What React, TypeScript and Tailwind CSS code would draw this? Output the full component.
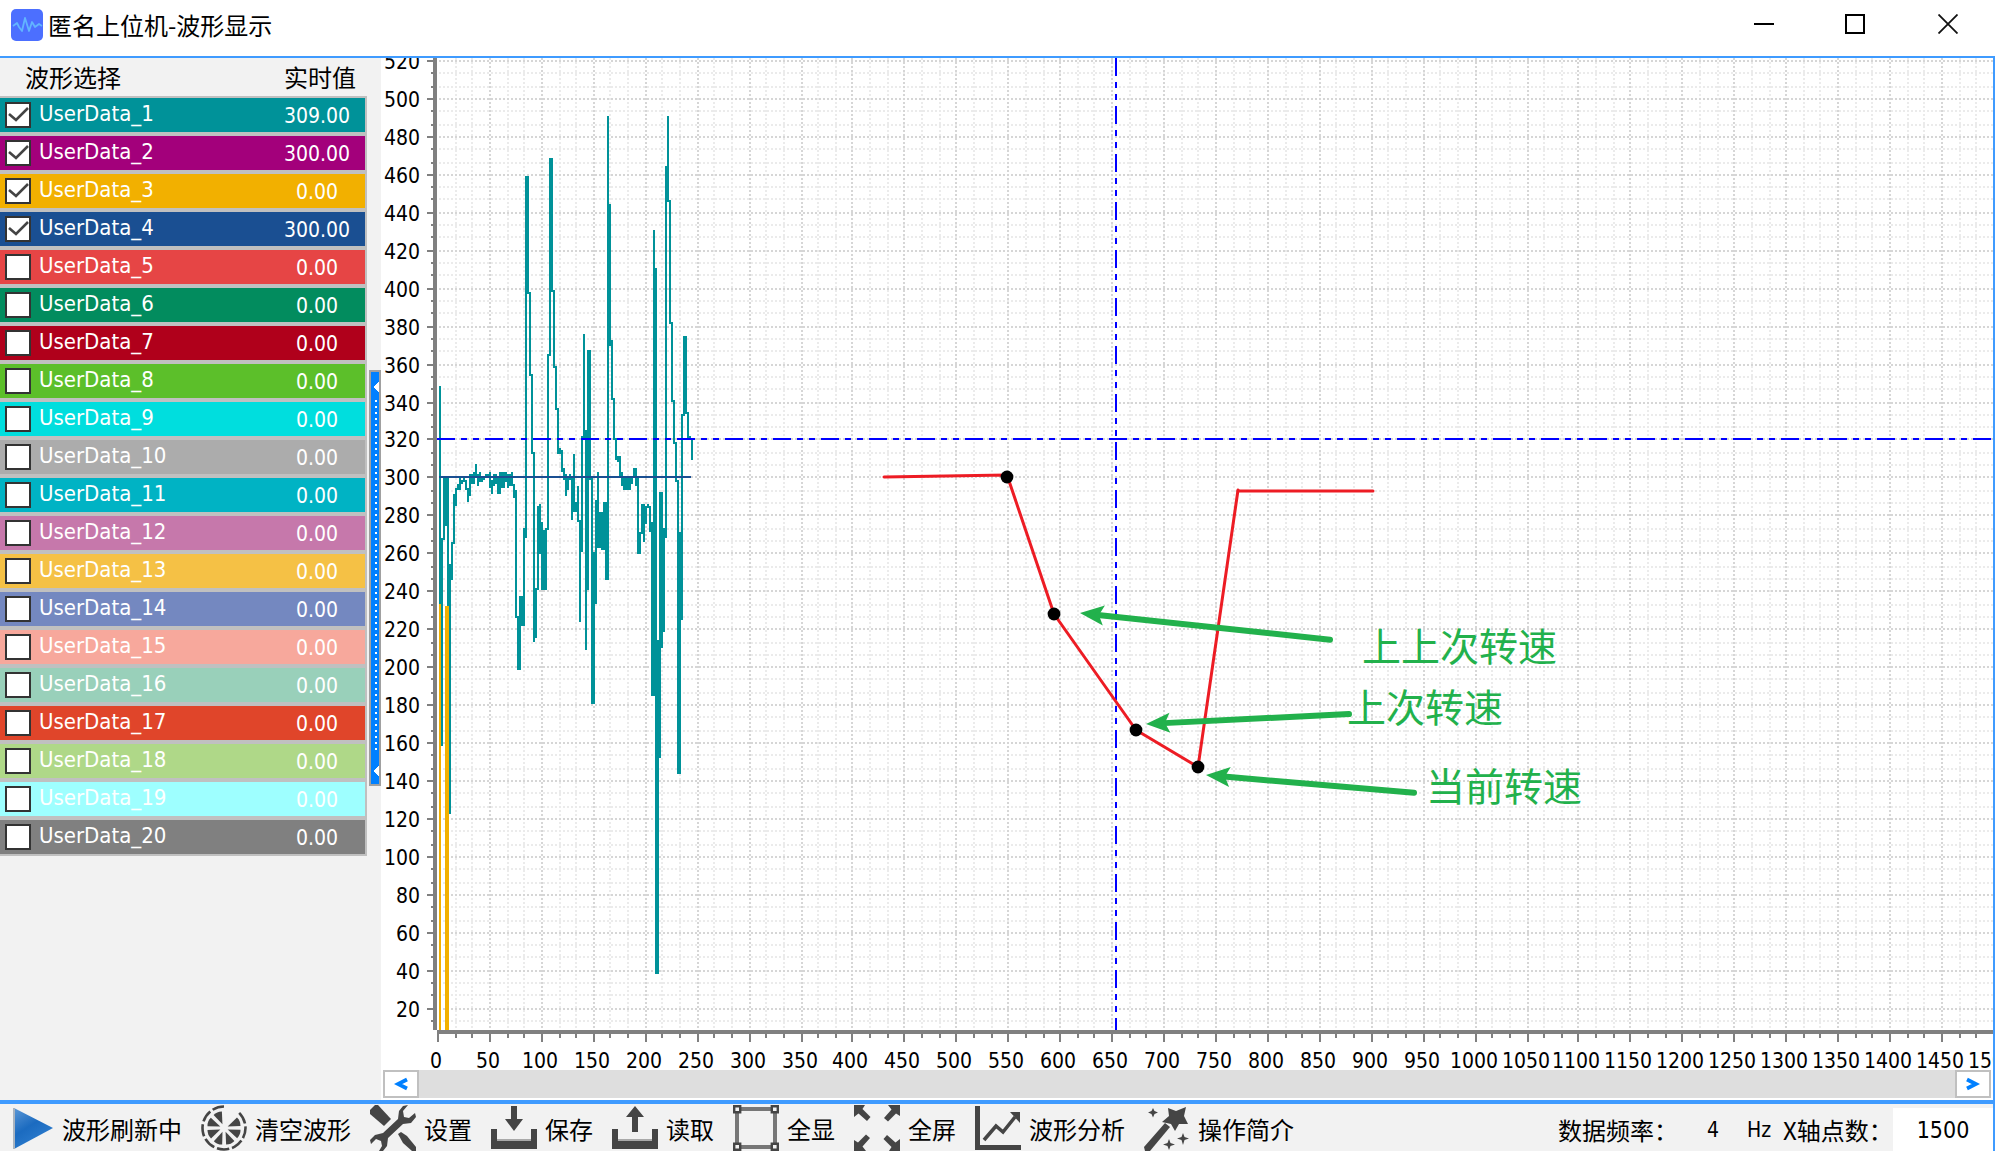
import React from "react";

type Channel = { color: string; value: string; on: boolean };

const CHANNELS: Channel[] = [
  { color: "bg-[#009299]", value: "309.00", on: true },
  { color: "bg-[#a3007b]", value: "300.00", on: true },
  { color: "bg-[#f2b000]", value: "0.00", on: true },
  { color: "bg-[#1a4f92]", value: "300.00", on: true },
  { color: "bg-[#e64545]", value: "0.00", on: false },
  { color: "bg-[#028c5e]", value: "0.00", on: false },
  { color: "bg-[#b0001b]", value: "0.00", on: false },
  { color: "bg-[#5cbf2a]", value: "0.00", on: false },
  { color: "bg-[#00dede]", value: "0.00", on: false },
  { color: "bg-[#acacac]", value: "0.00", on: false },
  { color: "bg-[#00b3c4]", value: "0.00", on: false },
  { color: "bg-[#c678ab]", value: "0.00", on: false },
  { color: "bg-[#f5c145]", value: "0.00", on: false },
  { color: "bg-[#7488c0]", value: "0.00", on: false },
  { color: "bg-[#f7a89c]", value: "0.00", on: false },
  { color: "bg-[#99d0ba]", value: "0.00", on: false },
  { color: "bg-[#e0452a]", value: "0.00", on: false },
  { color: "bg-[#afd888]", value: "0.00", on: false },
  { color: "bg-[#9effff]", value: "0.00", on: false },
  { color: "bg-[#808080]", value: "0.00", on: false },
];

const UI = "font-['DejaVu_Sans_Condensed','Noto_Sans_CJK_SC',sans-serif]";
const CJK = "font-['Noto_Sans_CJK_SC',sans-serif]";

/* Channel 1 trace: [x, width, top, bottom], three units to a pixel. */
const TRACE: [number, number, number, number][] = [
  [57, 6, 918, 1572], [63, 6, 1374, 1998], [69, 6, 1191, 1380], [75, 6, 1191, 1338], [81, 6, 1191, 1578],
  [87, 6, 1452, 2202], [93, 6, 1386, 1500], [99, 6, 1242, 1392], [105, 6, 1224, 1278], [111, 6, 1212, 1230],
  [117, 6, 1194, 1230], [123, 6, 1200, 1212], [129, 6, 1194, 1206], [135, 6, 1200, 1230], [141, 6, 1224, 1266],
  [147, 6, 1182, 1248], [153, 6, 1182, 1212], [159, 6, 1176, 1212], [165, 6, 1152, 1194], [171, 6, 1182, 1218],
  [177, 6, 1176, 1206], [183, 6, 1188, 1206], [189, 6, 1188, 1200], [195, 12, 1182, 1194], [207, 6, 1176, 1224],
  [213, 6, 1200, 1242], [219, 6, 1182, 1218], [225, 6, 1182, 1212], [231, 6, 1188, 1242], [237, 6, 1176, 1242],
  [243, 12, 1176, 1224], [255, 6, 1176, 1206], [261, 6, 1182, 1224], [267, 6, 1182, 1218], [273, 6, 1176, 1218],
  [279, 6, 1212, 1254], [285, 6, 1230, 1614], [291, 12, 1608, 1770], [297, 12, 1548, 1638], [309, 6, 1344, 1638],
  [315, 6, 288, 1374], [321, 6, 288, 642], [327, 6, 636, 888], [333, 6, 882, 1122], [339, 6, 1116, 1686],
  [345, 6, 1524, 1674], [351, 6, 1278, 1530], [357, 6, 1272, 1422], [363, 6, 1326, 1530], [369, 12, 1350, 1530],
  [375, 12, 1344, 1350], [381, 6, 822, 1350], [387, 6, 234, 828], [393, 6, 234, 636], [399, 6, 630, 864],
  [405, 6, 858, 990], [411, 6, 984, 1122], [417, 6, 1104, 1122], [423, 6, 1110, 1176], [429, 6, 1164, 1200],
  [435, 6, 1182, 1248], [441, 6, 1194, 1230], [447, 6, 1182, 1200], [453, 6, 1194, 1320], [459, 6, 1122, 1296],
  [465, 6, 1266, 1296], [471, 6, 1218, 1326], [477, 6, 1320, 1626], [483, 6, 1068, 1416], [489, 6, 762, 1074],
  [495, 6, 1050, 1710], [501, 6, 810, 1530], [507, 6, 810, 1200], [513, 6, 1194, 1872], [519, 6, 1416, 1872],
  [525, 6, 1260, 1572], [531, 6, 1176, 1404], [537, 6, 1296, 1404], [543, 6, 1296, 1410], [549, 6, 1266, 1410],
  [555, 6, 1266, 1500], [561, 6, 108, 1500], [567, 6, 372, 798], [573, 6, 780, 960], [579, 6, 954, 1080],
  [585, 6, 1074, 1140], [591, 6, 1128, 1146], [597, 6, 1128, 1188], [603, 6, 1176, 1218], [609, 24, 1194, 1230],
  [633, 6, 1194, 1212], [639, 12, 1164, 1194], [645, 6, 1188, 1218], [651, 6, 1188, 1422], [657, 6, 1356, 1422],
  [663, 6, 1272, 1362], [669, 6, 1272, 1386], [675, 6, 1278, 1332], [681, 6, 1272, 1284], [687, 6, 1278, 1356],
  [693, 6, 1326, 1848], [699, 6, 450, 1848], [705, 6, 564, 2682], [711, 6, 1680, 2682], [717, 6, 1236, 2034],
  [723, 6, 1236, 1704], [729, 6, 1344, 1656], [735, 6, 258, 1374], [741, 6, 108, 366], [747, 6, 360, 732],
  [753, 6, 726, 966], [759, 6, 960, 1092], [765, 6, 1086, 1206], [771, 6, 1200, 2082], [777, 6, 1356, 2082],
  [783, 6, 1002, 1620], [789, 6, 768, 1008], [795, 6, 768, 1002], [801, 6, 996, 1074], [807, 6, 1068, 1080],
  [813, 6, 1074, 1140],
];

/* Chart coordinates start at the plot's top-left corner. */
const AXIS_Y = 972;
const rows = Array.from({ length: 78 }, (_, i) => ({
  major: i % 3 === 0,
  value: 520 - (i / 3) * 20,
  y: 2 * Math.round(30 + (i * 18.95) / 3 - 0.02) - 57,
})).filter((r) => r.y < AXIS_Y);
const cols = Array.from({ length: 91 }, (_, i) => ({
  major: i % 3 === 0,
  value: (i / 3) * 50,
  x: 57 + 2 * Math.round((i * 25.93) / 3),
}));

const ARROWS: [number, number, number, number][] = [
  [699, 555, 951, 582],
  [765, 666, 970, 656],
  [825, 717, 1035, 735],
];

function Chart() {
  return (
    <svg className={`block h-full w-full overflow-visible text-[21px] ${UI}`} role="img" aria-label="波形显示">
      {[false, true].map((major) => (
        <g key={String(major)} stroke={major ? "#d6d6d6" : "#ebebeb"} strokeWidth={2} strokeDasharray="2 2" shapeRendering="crispEdges">
          {rows.filter((r) => r.major === major).map((r) => (
            <line key={r.y} x1={58} x2={1612} y1={r.y} y2={r.y} />
          ))}
          {cols.filter((c) => c.major === major && c.x > 60).map((c) => (
            <line key={c.x} x1={c.x} x2={c.x} y1={0} y2={AXIS_Y} />
          ))}
        </g>
      ))}
      <g fill="#808080" shapeRendering="crispEdges">
        <rect x={52} y={0} width={4} height={AXIS_Y} />
        <rect x={56} y={AXIS_Y} width="100%" height={4} />
        {rows.map((r) => (
          <rect key={r.y} x={r.major ? 46 : 50} y={r.y - 1} width={r.major ? 6 : 2} height={2} />
        ))}
        {cols.map((c) => (
          <rect key={c.x} x={c.x - 1} y={AXIS_Y + 4} width={2} height={c.major ? 8 : 4} />
        ))}
      </g>
      <g fill="#000">
        {rows.filter((r) => r.major).map((r) => (
          <text key={r.y} x={39} y={r.y + 8} textAnchor="end">{Math.round(r.value)}</text>
        ))}
        {cols.filter((c) => c.major).map((c) => (
          <text key={c.x} x={c.x - 2} y={1010} textAnchor="middle">{Math.round(c.value)}</text>
        ))}
      </g>
      <g shapeRendering="crispEdges">
        <g fill="#009299" transform="translate(39 22) scale(0.33333333)">
          {TRACE.map(([x, w, a, b], i) => (
            <rect key={i} x={x} y={a} width={w} height={b - a} />
          ))}
        </g>
        <rect x={58} y={418} width={252} height={2} fill="#1a4f92" />
        <g fill="#f2b000">
          <rect x={58} y={546} width={2} height={426} />
          <rect x={64} y={548} width={4} height={424} />
        </g>
        <g stroke="#0000ff" strokeWidth={2} strokeDasharray="18 6 6 6 6 6">
          <line x1={56} x2={1612} y1={381} y2={381} />
          <line x1={735} x2={735} y1={0} y2={AXIS_Y} />
        </g>
      </g>
      <polyline points="503,419 626,417 673,556 755,672 817,709 857,432" fill="none" stroke="#ed1c24" strokeWidth={3} strokeLinejoin="round" strokeLinecap="round" />
      <line x1={857} x2={992} y1={433} y2={433} stroke="#ed1c24" strokeWidth={3} strokeLinecap="round" />
      <g fill="#000">
        <circle cx={626} cy={419} r={6.4} />
        <circle cx={673} cy={556} r={6.4} />
        <circle cx={755} cy={672} r={6.4} />
        <circle cx={817} cy={709} r={6.4} />
      </g>
      {ARROWS.map(([x, y, ex, ey]) => {
        const deg = (Math.atan2(ey - y, ex - x) * 180) / Math.PI;
        const len = Math.hypot(ex - x, ey - y);
        return (
          <g key={x} transform={`translate(${x} ${y}) rotate(${deg})`} fill="#22b14c" stroke="none">
            <path d="M0 0 L24 -10 L19 0 L24 10 Z" />
            <line x1={18} x2={len - 2} y1={0} y2={0} stroke="#22b14c" strokeWidth={6} strokeLinecap="round" />
          </g>
        );
      })}
      <g className={`text-[39px] ${CJK}`} fill="#22b14c">
        <text x={981} y={603}>上上次转速</text>
        <text x={966} y={664}>上次转速</text>
        <text x={1045} y={743}>当前转速</text>
      </g>
    </svg>
  );
}

const D = "#454545";

const PlayIcon = () => (
  <svg className="h-[46px] w-[41px] shrink-0" viewBox="0 0 41 46">
    <defs>
      <linearGradient id="play" x1="0" y1="0" x2="0.6" y2="1">
        <stop offset="0" stopColor="#5b97d6" />
        <stop offset="0.5" stopColor="#1b6bc0" />
        <stop offset="1" stopColor="#2f7fd0" />
      </linearGradient>
    </defs>
    <path d="M1 3 L40 23 L1 44 Z" fill="url(#play)" />
    <path d="M1 3 V44" stroke="#a9b4c0" strokeWidth="2" />
  </svg>
);

const ClearIcon = () => (
  <svg className="h-[46px] w-[46px] shrink-0" viewBox="0 0 46 46" fill={D}>
    <path d="M38.200 7.800 A21.500 21.500 0 1 1 23 1.500" fill="none" stroke={D} strokeWidth="2.6" strokeDasharray="12.200 2.900" />
    {[45, 90, 135, 180, 225, 270, 315].map((a) => (
      <path key={a} transform={`rotate(${a + 22} 23 23)`} d="M23 19 L18.500 7 Q23 5 27.500 7 Z" />
    ))}
  </svg>
);

const ToolsIcon = () => (
  <svg className="h-[46px] w-[46px] shrink-0" viewBox="0 0 46 46" fill={D}>
    <path d="M0 5 L5 0 H8 L21 14 L14 21 L0 9 Z" />
    <path d="M28 29 L31 27 L37 31 L46 42 V46 H42 L33 38 Z" />
    <path d="M38 0 L33 6 L34 12 L39 13 L45 8 L46 12 L41 18 L33 19 L18 33 L17 41 L13 46 H9 L12 41 L11 36 L6 34 L1 39 L0 35 L5 30 L13 28 L28 14 L29 6 L33 1 Z" />
  </svg>
);

const TransferIcon = ({ up }: { up?: boolean }) => (
  <svg className="h-[46px] w-[46px] shrink-0" viewBox="0 0 46 46" fill={D}>
    <path d="M0 24 H6 V35 H40 V24 H46 V44 H0 Z" />
    <path d="M6 34 H40 V36 H6 Z" fill="#a9a9a9" />
    {up ? <path d="M20 27 V12 H14 L23 1 L32 12 H26 V27 Z" /> : <path d="M20 1 V14 H14 L23 26 L32 14 H26 V1 Z" />}
  </svg>
);

const FrameIcon = () => (
  <svg className="h-[46px] w-[46px] shrink-0" viewBox="0 0 46 46" fill="none" stroke={D} strokeWidth="2.4">
    <path d="M8 4 H38 M8 42 H38" stroke="#777" strokeWidth="4" />
    <path d="M4 8 V38 M42 8 V38" stroke="#777" strokeWidth="4" />
    <path d="M1.2 1.2h6v6h-6z M38.8 1.2h6v6h-6z M1.2 38.8h6v6h-6z M38.8 38.8h6v6h-6z" fill="#f2f2f2" />
  </svg>
);

const ExpandIcon = () => (
  <svg className="h-[46px] w-[46px] shrink-0" viewBox="0 0 46 46" fill={D}>
    {[0, 90, 180, 270].map((a) => (
      <path key={a} transform={`rotate(${a} 23 23)`} d="M0 0 H11 L8.500 4 L16.500 12 L13 16 L4.500 8.500 L0 12 Z" />
    ))}
  </svg>
);

const TrendIcon = () => (
  <svg className="h-[46px] w-[46px] shrink-0" viewBox="0 0 46 46" fill={D}>
    <path d="M0 1 H5 V40 H46 V45 H0 Z" />
    <path d="M9 35 L21 21 L28 27 L40 12" fill="none" stroke={D} strokeWidth="3.6" />
    <path d="M35 7 H45 V18 Z" />
  </svg>
);

const WandIcon = () => (
  <svg className="h-[46px] w-[46px] shrink-0" viewBox="0 0 46 46" fill={D}>
    <path d="M1 46 L0 42 L21 18 L26 22 L6 46 Z" />
    <path d="M42 2 L40 11 L44 19 L35 19 L31 26 L27 19 L18 17 L25 11 L24 3 L32 6 Z" />
    <path d="M9 3 L10.500 6 L14 7.500 L10.500 9 L9 12.500 L7.500 9 L4 7.500 L7.500 6 Z" />
    <path d="M39 28 L40.500 32 L45 33.500 L40.500 35 L39 40 L37.500 35 L33 33.500 L37.500 32 Z" />
    <path d="M25 34 L26.500 38 L31 39.500 L26.500 41 L25 45 L23.500 41 L19 39.500 L23.500 38 Z" />
  </svg>
);

const TOOLS: { label: string; icon: React.ReactNode }[] = [
  { label: "波形刷新中", icon: <PlayIcon /> },
  { label: "清空波形", icon: <ClearIcon /> },
  { label: "设置", icon: <ToolsIcon /> },
  { label: "保存", icon: <TransferIcon /> },
  { label: "读取", icon: <TransferIcon up /> },
  { label: "全显", icon: <FrameIcon /> },
  { label: "全屏", icon: <ExpandIcon /> },
  { label: "波形分析", icon: <TrendIcon /> },
  { label: "操作简介", icon: <WandIcon /> },
];

function TitleBar() {
  return (
    <header className="flex h-14 shrink-0 items-start justify-between bg-white">
      <div className="flex h-[50px] items-center gap-[5px] pl-[11px]">
        <svg className="h-8 w-8" viewBox="0 0 32 32">
          <rect width="32" height="32" rx="5" fill="#4c6fff" />
          <path d="M2 17 L6 14 L8 18 L11 22 L14 9 L18 22 L21 13 L24 18 L28 15 L31 17" fill="none" stroke="#62b4ff" strokeWidth="1.8" strokeLinejoin="round" />
        </svg>
        <h1 className={`text-2xl leading-8 text-black ${CJK}`}>匿名上位机-波形显示</h1>
      </div>
      <div className="flex h-12">
        <button type="button" aria-label="最小化" className="grid w-[91px] place-items-center">
          <svg className="h-5 w-5" viewBox="0 0 20 20"><path d="M0 10H20" stroke="#000" strokeWidth="2" /></svg>
        </button>
        <button type="button" aria-label="最大化" className="grid w-[92px] place-items-center">
          <svg className="h-5 w-5" viewBox="0 0 20 20"><path d="M1 1H19V19H1Z" stroke="#000" strokeWidth="2" fill="none" /></svg>
        </button>
        <button type="button" aria-label="关闭" className="grid w-[94px] place-items-center">
          <svg className="h-5 w-5" viewBox="0 0 20 20"><path d="M0.500 0.500L19.500 19.500M19.500 0.500L0.500 19.500" stroke="#111" strokeWidth="1.8" /></svg>
        </button>
      </div>
    </header>
  );
}

function ChannelTable() {
  return (
    <table className={`w-full border-separate border-spacing-0 text-[21px] leading-6 text-white ${UI}`}>
      <thead>
        <tr className={`h-[38px] text-2xl text-black ${CJK}`}>
          <th scope="col" className="p-0 pl-[25px] text-left font-normal">波形选择</th>
          <th scope="col" className="w-[98px] p-0 pr-[11px] text-right font-normal">实时值</th>
        </tr>
      </thead>
      <tbody>
        {CHANNELS.map((c, i) => (
          <tr key={i} className={`h-[38px] ${c.color}`}>
            <td className="border-y-2 border-[#c0c0c0] p-0">
              <label className="flex h-[34px] items-center gap-2 pl-[5px]">
                <span className="grid h-[26px] w-[26px]">
                  <input type="checkbox" defaultChecked={c.on} className="peer col-start-1 row-start-1 h-[26px] w-[26px] appearance-none border-2 border-[#333] bg-white" />
                  <svg className="pointer-events-none invisible col-start-1 row-start-1 peer-checked:visible" viewBox="0 0 26 26" fill="none" stroke="#444" strokeWidth="2.6">
                    <path d="M4 12 L11 18 L23 6" />
                  </svg>
                </span>
                <span className="pb-0.5 text-[22px]">UserData_{i + 1}</span>
              </label>
            </td>
            <td className="border-y-2 border-r-2 border-[#c0c0c0] p-0 pt-0.5 text-center">{c.value}</td>
          </tr>
        ))}
      </tbody>
    </table>
  );
}

function Splitter() {
  return (
    <div className="flex w-3 shrink-0 flex-col bg-[#f2f2f2] pt-[312px]">
      <button type="button" aria-label="折叠侧栏" className="flex h-[416px] w-3 border-2 border-[#a0a0a0] bg-[#0080ff]">
        <svg className="h-full w-full" viewBox="0 0 8 412" shapeRendering="crispEdges">
          <path d="M8 10 V20 L2 15 Z M8 394 V404 L2 399 Z" fill="#fff" />
          <path d="M5 28 V380" stroke="#fff" strokeWidth="2" strokeDasharray="2 4" />
        </svg>
      </button>
    </div>
  );
}

const SCROLL_BTN = "grid w-9 place-items-center border-2 border-[#c0c0c0] bg-white";

function ScrollBar() {
  return (
    <div className="mx-0.5 flex h-7 shrink-0 justify-between bg-[#dedede]">
      <button type="button" aria-label="向左滚动" className={SCROLL_BTN}>
        <svg className="h-3.5 w-3.5" viewBox="0 0 14 14"><path d="M13 2.500 L4 7 L13 11.500" fill="none" stroke="#0080ff" strokeWidth="3.8" /></svg>
      </button>
      <button type="button" aria-label="向右滚动" className={SCROLL_BTN}>
        <svg className="h-3.5 w-3.5" viewBox="0 0 14 14"><path d="M1 2.500 L10 7 L1 11.500" fill="none" stroke="#0080ff" strokeWidth="3.8" /></svg>
      </button>
    </div>
  );
}

function ToolBar() {
  return (
    <footer className={`flex h-[51px] shrink-0 items-stretch justify-between border-t-4 border-[#3f9bff] bg-[#f2f2f2] text-2xl text-black ${CJK}`}>
      <nav className="flex gap-[19px] pl-[13px]">
        {TOOLS.map((t) => (
          <button key={t.label} type="button" className="flex items-center gap-2 pt-px whitespace-nowrap">
            {t.icon}
            <span className="pt-0.5 leading-8">{t.label}</span>
          </button>
        ))}
      </nav>
      <div className="flex items-center border-r-2 border-[#3f9bff] pt-1">
        <span className="w-[121px] whitespace-nowrap">数据频率：</span>
        <output className={`w-[68px] text-center text-[21px] ${UI}`}>4</output>
        <span className={`w-9 text-[21px] ${UI}`}>Hz</span>
        <label htmlFor="points" className="w-[110px] whitespace-nowrap">X轴点数：</label>
        <input id="points" defaultValue="1500" className={`h-full w-[100px] bg-white text-center text-[23px] outline-none ${UI}`} />
      </div>
    </footer>
  );
}

export default function App() {
  return (
    <div className="flex h-screen flex-col overflow-hidden bg-white">
      <TitleBar />
      <main className="flex min-h-0 flex-1 overflow-hidden border-t-2 border-r-2 border-[#3f9bff]">
        <aside className="w-[369px] shrink-0 bg-[#f2f2f2] pr-0.5">
          <ChannelTable />
        </aside>
        <Splitter />
        <section className="flex min-w-0 flex-1 flex-col bg-white pb-0.5">
          <div className="min-h-0 flex-1">
            <Chart />
          </div>
          <ScrollBar />
        </section>
      </main>
      <ToolBar />
    </div>
  );
}
